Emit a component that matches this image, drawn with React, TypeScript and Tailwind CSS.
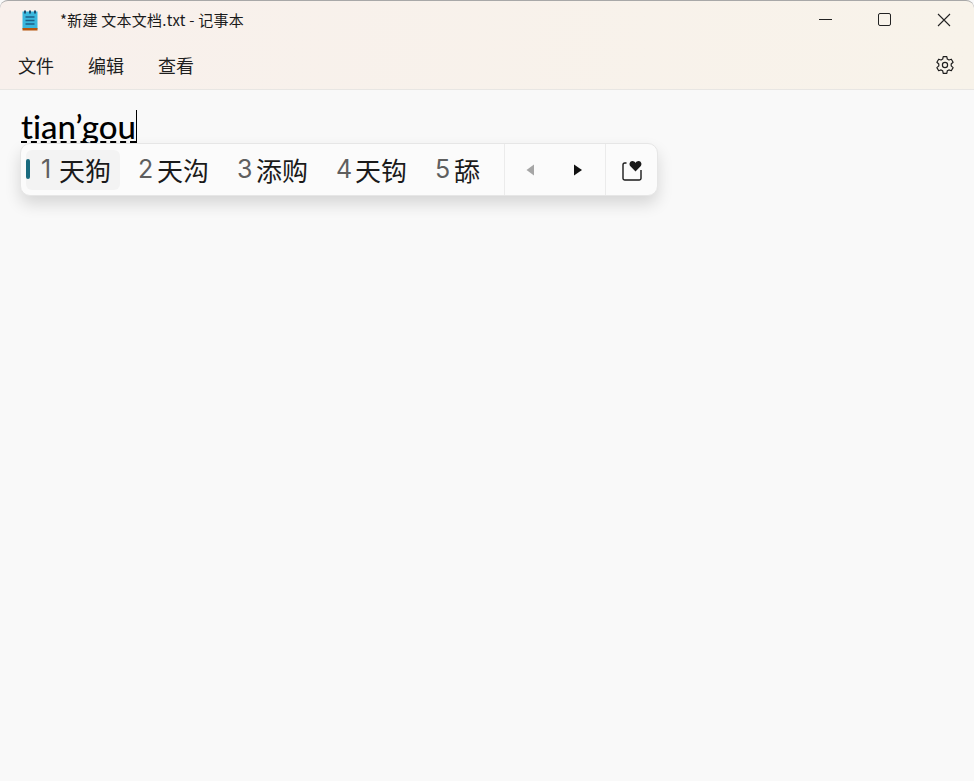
const MENU_ITEMS = ["文件", "编辑", "查看"];
const CANDIDATES = ["天狗", "天沟", "添购", "天钩", "舔"];

const cjk = "font-['Noto_Sans_CJK_SC','Liberation_Sans',sans-serif]";

function NotepadIcon() {
  return (
    <svg width="16" height="21" viewBox="0 0 16 21" className="block">
      <rect x="0.5" y="1.5" width="15" height="17.5" fill="#3ab7dd" />
      <rect x="0.5" y="18" width="15" height="2.5" fill="#b5560f" />
      <rect x="2" y="0.5" width="2" height="3" fill="#1b4f72" />
      <rect x="7" y="0.5" width="2" height="3" fill="#1b4f72" />
      <rect x="12" y="0.5" width="2" height="3" fill="#1b4f72" />
      <path d="M3.5 7h9M3.5 10.5h9M3.5 14h9" stroke="#1d5f88" strokeWidth="1.3" />
    </svg>
  );
}

function GearIcon() {
  return (
    <svg width="20" height="20" viewBox="0 0 20 20" fill="none" stroke="#1f1f1f" strokeWidth="1.2">
      <path d="M8.2 1.6h3.6l.5 2.5 1.6.9 2.4-.8 1.8 3.1-1.9 1.7v1.9l1.9 1.7-1.8 3.1-2.4-.8-1.6.9-.5 2.5H8.2l-.5-2.5-1.6-.9-2.4.8-1.8-3.1 1.9-1.7V9l-1.9-1.7 1.8-3.1 2.4.8 1.6-.9z" strokeLinejoin="round" />
      <circle cx="10" cy="10" r="2.6" />
    </svg>
  );
}

function Candidate({ index, text, active }: { index: number; text: string; active: boolean }) {
  return (
    <div
      className={
        active
          ? "relative flex h-10 w-[94px] shrink-0 items-center rounded-md bg-[#f3f3f3] pl-[15px]"
          : "flex h-10 w-[99px] shrink-0 items-center pl-[18px] last:w-[87px]"
      }
    >
      {active && <span className="absolute left-0 top-[9px] h-5 w-1 rounded-full bg-[#1a6b7f]" />}
      <span
        className={
          active
            ? "w-[18px] font-['Inter',sans-serif] text-[25px] leading-none text-[#5f5f5f]"
            : "w-[19px] font-['Inter',sans-serif] text-[25px] leading-none text-[#5f5f5f]"
        }
      >
        {index}
      </span>
      <span className={`${cjk} text-[26px] leading-none text-[#1a1a1a]`}>{text}</span>
    </div>
  );
}

export default function App() {
  return (
    <div className="h-[781px] w-[974px] overflow-hidden bg-[#f9f9f9]">
      <header className="h-[90px] rounded-t-lg border-t border-b border-t-[#a8a8a8] border-b-[#e8e6e3] bg-gradient-to-r from-[#f8f0ec] to-[#f8f3ea]">
        <div className="flex h-[39px] items-center">
          <div className="ml-[22px] w-[38px]">
            <NotepadIcon />
          </div>
          <span className={`${cjk} text-[15px] tracking-[0.25px] text-[#1a1a1a]`}>*新建 文本文档.txt - 记事本</span>
          <div className="ml-auto mb-[2px] flex items-center">
            <div className="flex w-[59px] justify-center pr-0.5">
              <span className="block h-px w-[13px] bg-[#222]" />
            </div>
            <div className="flex w-[59px] justify-center pr-0.5">
              <span className="block h-[13px] w-[13px] rounded-[2px] border-[1.5px] border-[#222]" />
            </div>
            <div className="flex w-[59px] justify-center pr-0.5">
              <svg width="14" height="14" viewBox="0 0 14 14" stroke="#222" strokeWidth="1.1">
                <path d="M1 1l12 12M13 1L1 13" />
              </svg>
            </div>
          </div>
        </div>
        <nav className="flex h-[50px] items-center pl-[18px] pr-[19px]">
          {MENU_ITEMS.map((item) => (
            <span key={item} className={`${cjk} mr-[34px] text-[18px] text-[#1f1f1f]`}>
              {item}
            </span>
          ))}
          <span className="ml-auto">
            <GearIcon />
          </span>
        </nav>
      </header>

      <main className="relative pl-[21px] pt-[20px]">
        <div className="flex h-[33px] items-start">
          <span className="h-[33px] border-b-2 border-dashed border-black font-['Lato',sans-serif] text-[33px] font-medium leading-[33px] text-black [font-variant-ligatures:none]">
            tian’gou
          </span>
          <span className="h-[33px] w-px bg-black" />
        </div>

        <div className="absolute left-5 top-[53px] flex h-[53px] w-[638px] items-center rounded-[10px] border border-[#e6e6e6] bg-[#fbfbfb] shadow-[0_8px_16px_rgba(0,0,0,0.14)]">
          <div className="flex w-[483px] items-center pl-[5px]">
            {CANDIDATES.map((text, i) => (
              <Candidate key={text} index={i + 1} text={text} active={i === 0} />
            ))}
          </div>
          <div className="flex h-full w-[102px] items-center gap-[38px] border-x border-[#ebebeb] pl-[20px]">
            <svg width="10" height="12" viewBox="0 0 10 12">
              <path d="M9 0.5v11L1.5 6z" fill="#a6a6a6" />
            </svg>
            <svg width="10" height="12" viewBox="0 0 10 12">
              <path d="M1 0.5v11L9 6z" fill="#111" />
            </svg>
          </div>
          <div className="flex h-full flex-1 items-center justify-center">
            <svg width="22" height="22" viewBox="0 0 22 22" fill="none">
              <path d="M5.5 4H3.8A1.8 1.8 0 0 0 2 5.8v13.4A1.8 1.8 0 0 0 3.8 21h14.4a1.8 1.8 0 0 0 1.8-1.8V11" stroke="#1a1a1a" strokeWidth="1.4" />
              <path d="M14.5 12.5 9.4 7.2C7.6 5.3 8.8 2 11.4 2c1.3 0 2.4.7 3.1 1.9C15.2 2.7 16.3 2 17.6 2c2.6 0 3.8 3.3 2 5.2z" fill="#1a1a1a" />
            </svg>
          </div>
        </div>
      </main>
    </div>
  );
}
